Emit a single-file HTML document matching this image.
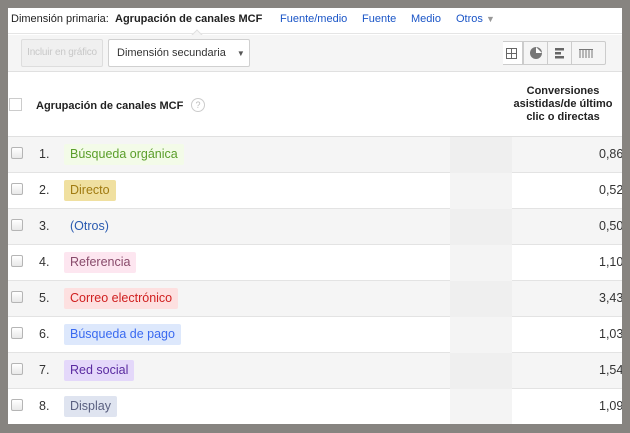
<!DOCTYPE html>
<html><head><meta charset="utf-8"><style>
*{margin:0;padding:0;box-sizing:border-box}
body{width:630px;height:433px;background:#878480;font-family:"Liberation Sans",Arial,sans-serif;position:relative;overflow:hidden}
#c{position:absolute;left:8px;top:8px;width:614px;height:416px;background:#fff;overflow:hidden}
.top{position:absolute;left:0;top:0;width:614px;height:26px;border-bottom:1px solid #e5e5e5;font-size:11px;line-height:22px;color:#222}
.top span{position:absolute;top:0}
.top .l{color:#1a55c7}
.tb{position:absolute;left:0;top:27px;width:614px;height:37px;background:#f5f5f5;border-bottom:1px solid #e0e0e0}
.btn{position:absolute;top:12px;height:28px;border:1px solid #d0d0d0;border-radius:2px;font-size:11px;line-height:26px;white-space:nowrap}
.hdr{position:absolute;left:0;top:65px;width:614px;height:64px;border-bottom:1px solid #e0e0e0;background:#fff}
.row{position:absolute;left:0;width:614px;height:36px;border-bottom:1px solid #e3e3e3;font-size:12.5px}
.row.g{background:#f5f5f5}
.cb{position:absolute;left:3px;top:10px;width:12px;height:12px;border:1px solid #b5b5b5;border-radius:2px;background:linear-gradient(#fff,#e8e8e8)}
.n{position:absolute;left:31px;top:10px;color:#333}
.tag{position:absolute;left:56px;top:7px;height:21px;line-height:21px;padding:0 6px;border-radius:2px}
.v{position:absolute;left:591px;top:10px;color:#333;white-space:nowrap}
.sm{position:absolute;left:442px;width:62px;background:#efefef}
.ib{position:absolute;top:6px;width:25px;height:24px;border:1px solid #ccc;background:#f5f5f5}
</style></head><body><div id="c">
<div class="top">
<span style="left:3px">Dimensión primaria:</span>
<span style="left:107px;font-weight:bold">Agrupación de canales MCF</span>
<span class="l" style="left:272px">Fuente/medio</span>
<span class="l" style="left:354px">Fuente</span>
<span class="l" style="left:403px">Medio</span>
<span class="l" style="left:448px">Otros <span style="position:static;color:#999;font-size:9px">▼</span></span>
</div>
<div style="position:absolute;left:185px;top:23px;width:8px;height:8px;background:#f5f5f5;border-left:1px solid #e0e0e0;border-top:1px solid #e0e0e0;transform:rotate(45deg)"></div>
<div class="tb">
<div class="btn" style="top:4px;left:13px;width:82px;color:#c8c8c8;background:#f0f0f0;text-align:center;border-color:#ddd;font-size:10px;letter-spacing:-0.2px;overflow:hidden">Incluir en gráfico</div>
<div class="btn" style="top:4px;left:100px;width:142px;background:#fff;color:#333;padding-left:8px">Dimensión secundaria <span style="font-size:8px;color:#555;margin-left:8px">▼</span></div>
<div class="ib" style="left:495px;width:20px;border-left:none;background:#fff"><svg width="20" height="22"><rect x="3.5" y="6.5" width="10" height="10" fill="none" stroke="#666"/><path d="M8.5 6.5v10M3.5 11.5h10" stroke="#666"/></svg></div>
<div class="ib" style="left:515px"><svg width="23" height="22"><circle cx="12" cy="11" r="6" fill="#777"/><path d="M12 5v6h6" fill="#fff"/></svg></div>
<div class="ib" style="left:539px"><svg width="23" height="22"><rect x="7" y="6" width="9" height="2.5" fill="#666"/><rect x="7" y="10" width="6" height="2.5" fill="#666"/><rect x="7" y="14" width="9" height="2.5" fill="#666"/></svg></div>
<div class="ib" style="left:563px;width:35px;border-radius:0 2px 2px 0"><svg width="33" height="22"><path d="M8 7v9M11 7v9M14 7v9M17 7v9M20 7v9M7 7.5h14" stroke="#777"/></svg></div>
</div>
<div class="hdr">
<div style="position:absolute;left:1px;top:25px;width:13px;height:13px;border:1px solid #ccc;background:#fff"></div>
<div style="position:absolute;left:28px;top:27px;font-size:11px;font-weight:bold;color:#222">Agrupación de canales MCF</div>
<div style="position:absolute;left:183px;top:25px;width:14px;height:14px;border:1px solid #ccc;border-radius:50%;font-size:9px;color:#bbb;text-align:center;line-height:12px">?</div>
<div style="position:absolute;left:500px;top:12px;width:110px;font-size:11px;font-weight:bold;color:#222;text-align:center;line-height:13px">Conversiones asistidas/de último clic o directas</div>
</div>
<div class="row g" style="top:129px"><div class="cb"></div><div class="n">1.</div><div class="tag" style="background:#f3fbe8;color:#5a9e2a">Búsqueda orgánica</div><div class="sm" style="top:0;height:36px"></div><div class="v">0,86</div></div>
<div class="row" style="top:165px"><div class="cb"></div><div class="n">2.</div><div class="tag" style="background:#f0e0a0;color:#a07a10">Directo</div><div class="sm" style="top:0;height:36px;background:#f4f4f4"></div><div class="v">0,52</div></div>
<div class="row g" style="top:201px"><div class="cb"></div><div class="n">3.</div><div class="tag" style="color:#2a5ab0">(Otros)</div><div class="sm" style="top:0;height:36px"></div><div class="v">0,50</div></div>
<div class="row" style="top:237px"><div class="cb"></div><div class="n">4.</div><div class="tag" style="background:#fde6f0;color:#884a6a">Referencia</div><div class="sm" style="top:0;height:36px;background:#f4f4f4"></div><div class="v">1,10</div></div>
<div class="row g" style="top:273px"><div class="cb"></div><div class="n">5.</div><div class="tag" style="background:#fde0e0;color:#d02020">Correo electrónico</div><div class="sm" style="top:0;height:36px"></div><div class="v">3,43</div></div>
<div class="row" style="top:309px"><div class="cb"></div><div class="n">6.</div><div class="tag" style="background:#dde8fc;color:#3a6af0">Búsqueda de pago</div><div class="sm" style="top:0;height:36px;background:#f4f4f4"></div><div class="v">1,03</div></div>
<div class="row g" style="top:345px"><div class="cb"></div><div class="n">7.</div><div class="tag" style="background:#e4d8fa;color:#5a2aa0">Red social</div><div class="sm" style="top:0;height:36px"></div><div class="v">1,54</div></div>
<div class="row" style="top:381px"><div class="cb"></div><div class="n">8.</div><div class="tag" style="background:#dfe4f0;color:#5a6080">Display</div><div class="sm" style="top:0;height:36px;background:#f4f4f4"></div><div class="v">1,09</div></div>
</div></body></html>
